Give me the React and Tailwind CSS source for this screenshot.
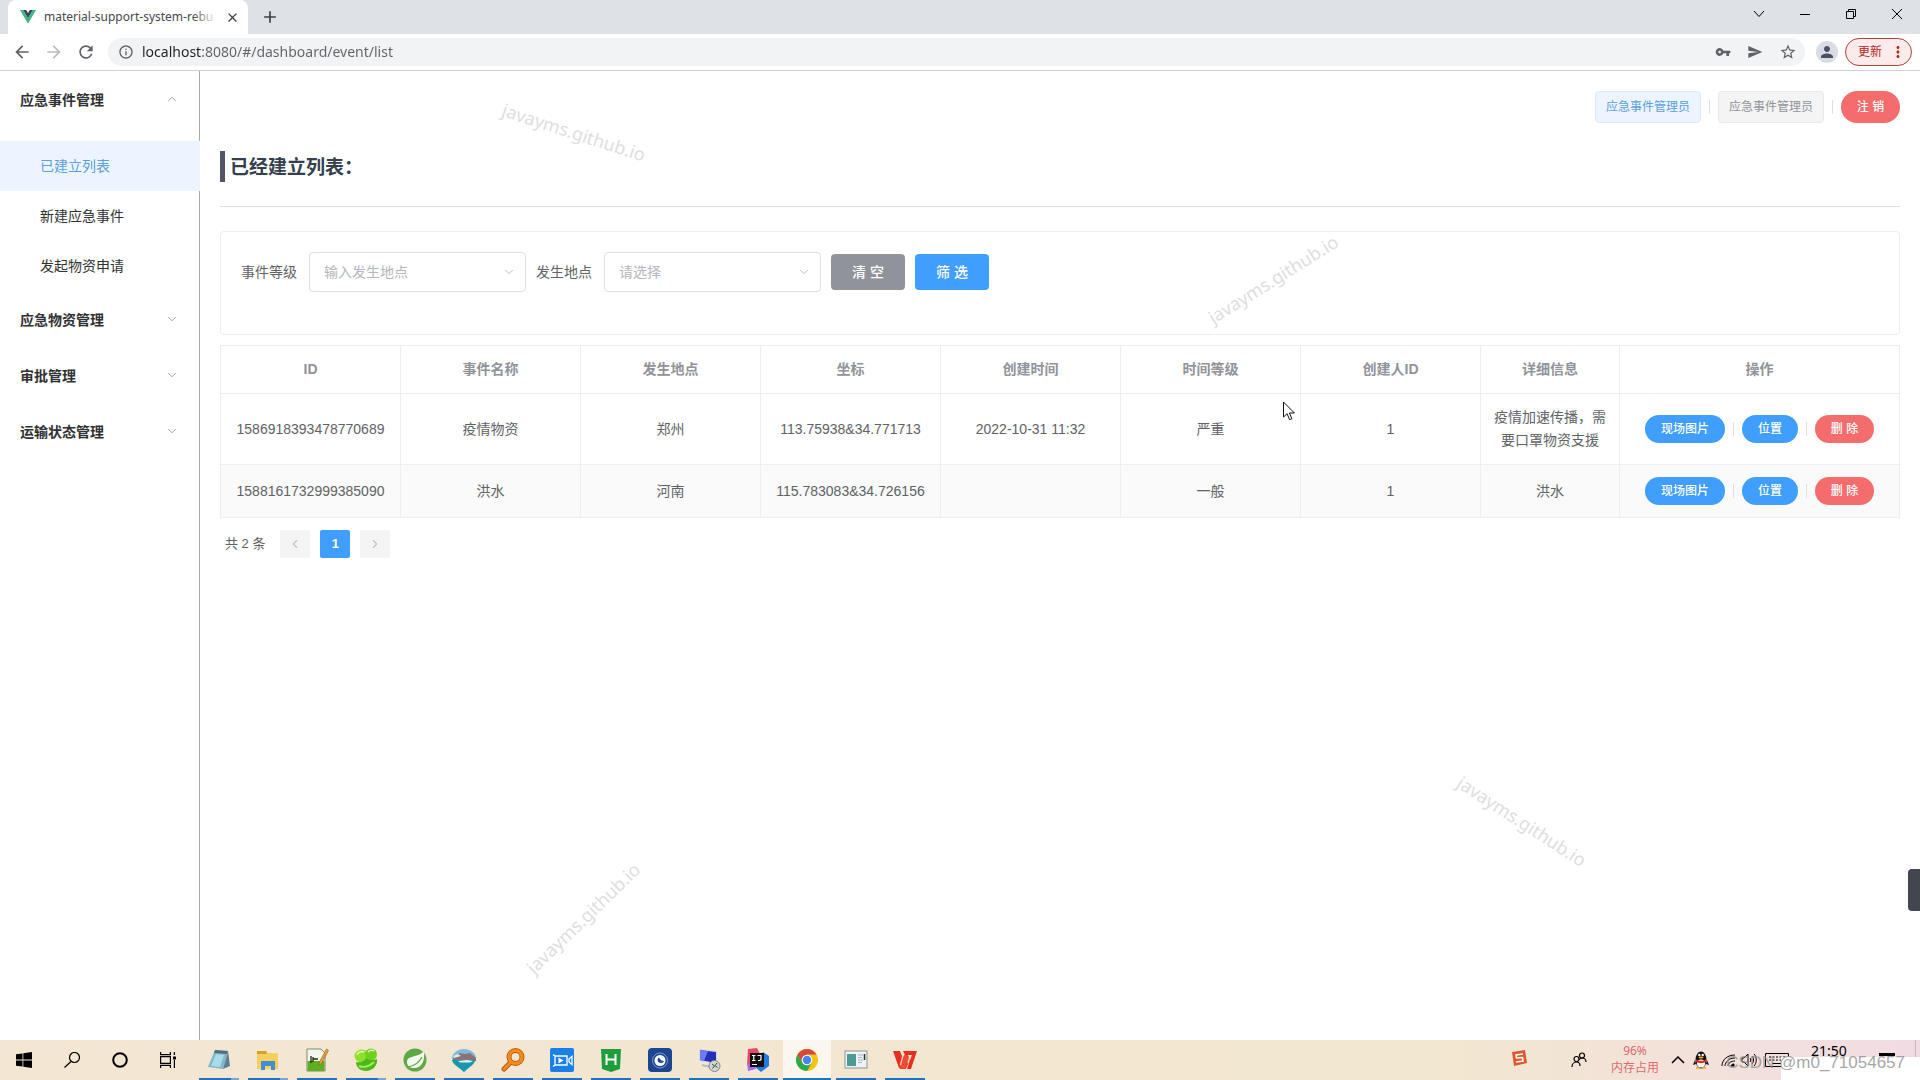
import {
    MdAdd,
    MdArrowBack,
    MdArrowForward,
    MdClose,
    MdInfoOutline,
    MdMoreVert,
    MdPerson,
    MdRefresh,
    MdSend,
    MdStarBorder,
    MdVpnKey,
} from 'react-icons/md';
import { ChevronDown, ChevronLeft, ChevronRight, ChevronUp } from 'lucide-react';

const EVENT_LINKS = [
    { label: '已建立列表', href: '#/dashboard/event/list', active: true },
    { label: '新建应急事件', href: '#/dashboard/event/create' },
    { label: '发起物资申请', href: '#/dashboard/event/apply' },
];

const CLOSED_GROUPS = ['应急物资管理', '审批管理', '运输状态管理'];

const COLUMNS = ['ID', '事件名称', '发生地点', '坐标', '创建时间', '时间等级', '创建人ID', '详细信息', '操作'];

const ROWS = [
    {
        id: '1586918393478770689',
        name: '疫情物资',
        place: '郑州',
        point: '113.75938&34.771713',
        created: '2022-10-31 11:32',
        level: '严重',
        creator: '1',
        detail: '疫情加速传播，需要口罩物资支援',
    },
    {
        id: '1588161732999385090',
        name: '洪水',
        place: '河南',
        point: '115.783083&34.726156',
        created: '',
        level: '一般',
        creator: '1',
        detail: '洪水',
    },
];

function VueLogo() {
    return (
        <svg viewBox="0 0 16 14" className="h-3.5 w-4 shrink-0" aria-hidden="true">
            <path d="M0 0h3.2L8 8.3 12.8 0H16L8 13.8z" fill="#41b883" />
            <path d="M3.2 0h3L8 3.1 9.8 0h3L8 8.3z" fill="#35495e" />
        </svg>
    );
}

function BrowserChrome() {
    return (
        <header className="font-['Noto_Sans','Noto_Sans_CJK_SC',sans-serif]">
            <div className="flex h-[34px] bg-[#dee1e6] pl-2">
                <div className="flex w-60 items-center rounded-t-lg bg-white pl-3 pr-2">
                    <VueLogo />
                    <span className="relative ml-2 flex-1 whitespace-nowrap text-xs text-[#45484c]">
                        material-support-system-rebu
                        <span className="absolute inset-y-0 right-0 w-6 bg-linear-to-r from-white/0 to-white" />
                    </span>
                    <button type="button" aria-label="Close tab" className="ml-2 text-[#3c4043]">
                        <MdClose size={15} />
                    </button>
                </div>
                <button type="button" aria-label="New tab" className="ml-3 text-[#3c4043]">
                    <MdAdd size={20} />
                </button>
                <div className="ml-auto flex h-7 text-black">
                    <button type="button" aria-label="Search tabs" className="flex w-[46px] items-center justify-center">
                        <svg viewBox="0 0 12 12" className="size-3" fill="none" stroke="currentColor">
                            <path d="M1 3l5 5.5L11 3" />
                        </svg>
                    </button>
                    <button type="button" aria-label="Minimize" className="flex w-[46px] items-center justify-center">
                        <svg viewBox="0 0 10 10" className="size-2.5" fill="none" stroke="currentColor">
                            <path d="M0 5.5h10" />
                        </svg>
                    </button>
                    <button type="button" aria-label="Restore" className="flex w-[46px] items-center justify-center">
                        <svg viewBox="0 0 10 10" className="size-2.5" fill="none" stroke="currentColor">
                            <path d="M.5 2.5h7v7h-7zM2.5 2.5v-2h7v7h-2" />
                        </svg>
                    </button>
                    <button type="button" aria-label="Close window" className="flex w-[46px] items-center justify-center">
                        <svg viewBox="0 0 10 10" className="size-2.5" fill="none" stroke="currentColor">
                            <path d="M0 0l10 10M10 0L0 10" />
                        </svg>
                    </button>
                </div>
            </div>
            <div className="flex h-[37px] items-center border-b border-[#d0d2d5] bg-white pl-3 pr-2 text-[#5f6368]">
                <button type="button" aria-label="Back">
                    <MdArrowBack size={20} />
                </button>
                <button type="button" aria-label="Forward" className="ml-3 text-[#babcbe]">
                    <MdArrowForward size={20} />
                </button>
                <button type="button" aria-label="Reload" className="ml-3">
                    <MdRefresh size={20} />
                </button>
                <div className="ml-3 flex h-7 flex-1 items-center rounded-full bg-[#f1f3f4] pl-2.5 pr-2">
                    <MdInfoOutline size={16} />
                    <input
                        aria-label="Address"
                        readOnly
                        value="localhost:8080/#/dashboard/event/list"
                        className="ml-2 flex-1 bg-linear-to-r from-[#202124] from-[60px] to-[#5f6368] to-[60px] bg-clip-text text-sm text-transparent outline-none"
                    />
                    <button type="button" aria-label="Passwords">
                        <MdVpnKey size={16} />
                    </button>
                    <button type="button" aria-label="Share" className="ml-4">
                        <MdSend size={16} />
                    </button>
                    <button type="button" aria-label="Bookmark" className="ml-4">
                        <MdStarBorder size={18} />
                    </button>
                </div>
                <button
                    type="button"
                    aria-label="Profile"
                    className="ml-[11px] flex size-[22px] items-center justify-center rounded-full bg-[#dadce3] text-[#4a5164]"
                >
                    <MdPerson size={18} />
                </button>
                <button
                    type="button"
                    className="ml-[7px] flex h-7 w-[67px] items-center justify-between rounded-full border border-[#b3403a] bg-[#fbeceb] pl-3 pr-1 text-xs text-[#b3261e]"
                >
                    更新
                    <MdMoreVert size={18} />
                </button>
            </div>
        </header>
    );
}

function Sidebar() {
    return (
        <nav className="w-[200px] shrink-0 border-r border-[#a9a9a9] text-sm text-[#303133]">
            <button type="button" className="flex h-14 w-full items-center justify-between px-5 font-bold">
                <span className="pt-0.5">应急事件管理</span>
                <ChevronUp size={14} strokeWidth={1.5} className="text-[#909399]" />
            </button>
            <ul className="pt-3.5">
                {EVENT_LINKS.map((item) => (
                    <li key={item.label}>
                        <a
                            href={item.href}
                            className={
                                item.active
                                    ? '-mr-px flex h-[50px] items-center bg-[#ecf5ff] pl-10 text-[#5a9fdc]'
                                    : 'flex h-[50px] items-center pl-10'
                            }
                        >
                            {item.label}
                        </a>
                    </li>
                ))}
            </ul>
            {CLOSED_GROUPS.map((label) => (
                <button key={label} type="button" className="flex h-14 w-full items-center justify-between px-5 font-bold">
                    <span className="pt-0.5">{label}</span>
                    <ChevronDown size={14} strokeWidth={1.5} className="text-[#909399]" />
                </button>
            ))}
        </nav>
    );
}

function Divider() {
    return <span className="mx-2 h-3.5 w-px bg-[#dcdfe6]" />;
}

function FilterSelect({ id, label, placeholder }) {
    return (
        <div className="flex items-center">
            <label htmlFor={id} className="pr-3 text-[#606266]">
                {label}
            </label>
            <div className="relative">
                <select
                    id={id}
                    className="h-10 w-[217px] appearance-none rounded border border-[#dcdfe6] bg-white px-3.5 text-sm text-[#b4b7bd]"
                >
                    <option>{placeholder}</option>
                </select>
                <ChevronDown size={14} strokeWidth={1.5} className="pointer-events-none absolute right-2.5 top-[13px] text-[#b4b7bd]" />
            </div>
        </div>
    );
}

function RowActions() {
    return (
        <div className="flex items-center justify-center text-xs text-white">
            <button type="button" className="h-7 w-20 rounded-full bg-[#409eff] font-medium">
                现场图片
            </button>
            <Divider />
            <button type="button" className="h-7 w-14 rounded-full bg-[#409eff] font-medium">
                位置
            </button>
            <Divider />
            <button type="button" className="h-7 w-[59px] rounded-full bg-[#f56c6c] font-medium">
                删 除
            </button>
        </div>
    );
}

function EventTable() {
    return (
        <table className="mt-2.5 w-full table-fixed border-collapse text-center leading-[23px] text-[#606266]">
            <colgroup>
                <col span={7} className="w-[180px]" />
                <col className="w-[139px]" />
                <col />
            </colgroup>
            <thead>
                <tr className="h-12 text-[#909399]">
                    {COLUMNS.map((name) => (
                        <th key={name} className="border border-[#ebeef5] font-bold">
                            {name}
                        </th>
                    ))}
                </tr>
            </thead>
            <tbody>
                {ROWS.map((row) => (
                    <tr key={row.id} className="even:bg-[#fafafa]">
                        {Object.entries(row).map(([key, value]) => (
                            <td key={key} className="border border-[#ebeef5] px-2.5 py-3">
                                {value}
                            </td>
                        ))}
                        <td className="border border-[#ebeef5] px-2.5 py-3">
                            <RowActions />
                        </td>
                    </tr>
                ))}
            </tbody>
        </table>
    );
}

function Pagination() {
    return (
        <div className="mt-3 flex items-center pl-[5px] text-[13px] text-[#606266]">
            <span className="mr-[15px]">共 2 条</span>
            <button type="button" aria-label="Previous" className="flex h-7 w-[30px] items-center justify-center rounded-xs bg-[#f4f4f5] text-[#c0c4cc]">
                <ChevronLeft size={14} />
            </button>
            <button type="button" className="mx-2.5 h-7 w-[30px] rounded-xs bg-[#409eff] font-bold text-white">
                1
            </button>
            <button type="button" aria-label="Next" className="flex h-7 w-[30px] items-center justify-center rounded-xs bg-[#f4f4f5] text-[#c0c4cc]">
                <ChevronRight size={14} />
            </button>
        </div>
    );
}

function EventList() {
    return (
        <main className="min-w-0 flex-1 px-5 text-sm">
            <div className="flex items-center justify-end pt-5 text-xs">
                <span className="rounded border border-[#d9ecff] bg-[#ecf5ff] px-2.5 leading-[30px] text-[#5a9fdc]">应急事件管理员</span>
                <Divider />
                <span className="rounded border border-[#e9e9eb] bg-[#f4f4f5] px-2.5 leading-[30px] text-[#909399]">应急事件管理员</span>
                <Divider />
                <button type="button" className="h-8 w-[59px] rounded-full bg-[#f56c6c] font-medium text-white">
                    注 销
                </button>
            </div>
            <h3 className="mt-7 border-l-[5px] border-[#505663] pl-[5px] pt-[3px] text-[19px] font-bold leading-7 text-[#34404e]">
                已经建立列表：
            </h3>
            <hr className="mt-6 border-[#dcdfe6]" />

            <form className="mt-6 flex h-[104px] items-start gap-2.5 rounded border border-[#ebeef5] px-5 pt-5">
                <FilterSelect id="level" label="事件等级" placeholder="输入发生地点" />
                <FilterSelect id="place" label="发生地点" placeholder="请选择" />
                <button type="reset" className="mt-0.5 h-9 w-[74px] rounded bg-[#909399] font-medium text-white">
                    清 空
                </button>
                <button type="button" className="mt-0.5 h-9 w-[74px] rounded bg-[#409eff] font-medium text-white">
                    筛 选
                </button>
            </form>

            <EventTable />
            <Pagination />
        </main>
    );
}

const APPS = [
    {
        name: 'Notepad',
        more: true,
        icon: (
            <>
                <path d="M8 2l13 1-5 18-15-2z" fill="#7fb9cc" />
                <path d="M8 2l13 1-1 3L7 5z" fill="#4f6f7c" />
                <path d="M9 6l8 1-4 12-9-1z" fill="#a9dbe8" />
                <path d="M21 3l2 15-7 3z" fill="#5e7f90" />
            </>
        ),
    },
    {
        name: 'Explorer',
        more: true,
        icon: (
            <>
                <path d="M1 3h9l2 2h10v16H1z" fill="#f7cf5c" />
                <path d="M1 3h9l1 3H1z" fill="#d9a026" />
                <path d="M5 22v-9h14v9h-4v-4H9v4z" fill="#3f8fd2" />
            </>
        ),
    },
    {
        name: 'Editor',
        icon: (
            <>
                <path d="M2 1h14l4 4v18H2z" fill="#f4f7ee" stroke="#7c8c70" />
                <path d="M2.500 13h17v10h-17z" fill="#5fae1e" />
                <path d="M6 8v7M8 9v5M8 11h5" stroke="#1d2b14" strokeWidth="1.300" />
                <path d="M21.500 1l2 1.500-7 13-2.500 1.500.3-3z" fill="#e2a13a" stroke="#8b5a1b" strokeWidth=".6" />
            </>
        ),
    },
    {
        name: 'Clover',
        more: true,
        icon: (
            <>
                <ellipse cx="7.500" cy="8" rx="7" ry="6.500" fill="#8fe02c" />
                <ellipse cx="17" cy="6.500" rx="6" ry="6" fill="#6fcf1c" />
                <path d="M2 14c5 1 9-1 10-4 2 2 7 3 11 1 1 7-5 12-11 12-6 0-10-4-10-9z" fill="#4db81a" />
                <path d="M3 7c1-3 4-4 7-3M14 4c2-2 4-2 6-1" stroke="#dcfab0" strokeWidth="1.500" fill="none" />
                <path d="M5 18c5 2 11 0 15-4" stroke="#a5ec5c" strokeWidth="2" fill="none" />
            </>
        ),
    },
    {
        name: 'Spring',
        icon: (
            <>
                <circle cx="12" cy="12" r="11.500" fill="#5fa944" />
                <path d="M21 3c1 10-2 17-10 17-4 0-7-2-7-6 0-7 11-4 17-11z" fill="#f4f8ee" />
                <path d="M5 19c6-1 11-4 14-10" stroke="#5fa944" strokeWidth="1.200" fill="none" />
            </>
        ),
    },
    {
        name: 'Navicat',
        icon: (
            <>
                <path d="M12 1c6 0 12 4 12 9 0 6-7 9-12 14C7 19 0 16 0 10c0-5 6-9 12-9z" fill="#7dbbdd" />
                <path d="M1 10l7-5 5 1 5-1 6 5v3H1z" fill="#8a7276" />
                <path d="M1 8l5-2 3 2-7 2z" fill="#dce9f2" />
                <path d="M0 12h23c-1 5-6 7-11 12C7 19 1 17 0 12z" fill="#1697ad" />
                <path d="M6 13l9-1 6 1-3 1.500H8z" fill="#dff3f5" />
            </>
        ),
    },
    {
        name: 'Everything',
        icon: (
            <>
                <path d="M10 14l-7 7" stroke="#b45a0b" strokeWidth="5" strokeLinecap="round" />
                <circle cx="14.500" cy="9" r="6.500" fill="none" stroke="#b45a0b" strokeWidth="5" />
                <path d="M10 14l-7 7" stroke="#f58a1f" strokeWidth="3" strokeLinecap="round" />
                <circle cx="14.500" cy="9" r="6.500" fill="none" stroke="#f58a1f" strokeWidth="3.200" />
            </>
        ),
    },
    {
        name: 'Recorder',
        icon: (
            <>
                <rect width="24" height="24" rx="2" fill="#1a7fe6" />
                <path d="M3 6.500l2 1.500h12v9H5l-2 1.500M5 8v9M19 11l3-2.500v8L19 14z" fill="none" stroke="#fff" strokeWidth="1.300" />
                <path d="M8.500 9.500l5 3-5 3z" fill="#fff" />
            </>
        ),
    },
    {
        name: 'HBuilder',
        icon: (
            <>
                <path d="M2 1h20l-1 20-9 3-9-3z" fill="#1f9d3a" />
                <path d="M7.500 6v11M16.500 6v11M7.500 11.500h9" stroke="#fff" strokeWidth="2" />
            </>
        ),
    },
    {
        name: 'Cloud',
        icon: (
            <>
                <rect width="24" height="24" rx="4" fill="#1e4590" />
                <circle cx="12" cy="12.500" r="7.500" fill="none" stroke="#8fabdc" strokeWidth=".8" />
                <circle cx="12" cy="12.500" r="5.500" fill="#fff" />
                <path d="M10.500 9.500c-2 2.500-.5 5.500 2.500 5.500 1.500 0 2.500-.8 3-2l-2.500-.5z" fill="#1e4590" />
            </>
        ),
    },
    {
        name: 'Remote',
        icon: (
            <>
                <path d="M2 1l18 2v13L2 13z" fill="#d4dbe6" />
                <path d="M3 2l16 2v11L3 12z" fill="#2530b8" />
                <path d="M3 2l8 1-4 10-4-1z" fill="#6f7cf0" />
                <path d="M5 16l9 2v2l-9-2z" fill="#b4bcc8" />
                <circle cx="17.500" cy="18" r="5.500" fill="#d3d6d2" stroke="#82867f" />
                <path d="M15 16l2.500 2-2 2.500M20 15l-2 2.500 2.500 2" stroke="#3c4a2d" fill="none" />
            </>
        ),
    },
    {
        name: 'IDEA',
        icon: (
            <>
                <path d="M2 1l9-1 3 6-5 12-8-1z" fill="#e64c68" />
                <path d="M1 15l7 2 2 4-8 2z" fill="#a06cf0" />
                <path d="M17 4l6 4v10l-8 6-6-5z" fill="#2377e0" />
                <rect x="4" y="5" width="14" height="14" fill="#101010" />
                <path d="M6 7.500h3.500M7.750 7.500v5M6 12.500h3.500M11.500 7.500h3.500v4l-1 1h-2M6 16.500h5" stroke="#fff" strokeWidth="1.200" fill="none" />
            </>
        ),
    },
    {
        name: 'Chrome',
        active: true,
        icon: (
            <>
                <circle cx="12" cy="12" r="11" fill="#fbc116" />
                <path d="M2.500 6.500A11 11 0 0 1 21.530 6.500H12L7.240 14.750z" fill="#d9463a" />
                <path d="M2.500 6.500A11 11 0 0 0 12 23L16.760 14.750 12 12 7.240 14.750z" fill="#2da94f" />
                <circle cx="12" cy="12" r="5.300" fill="#fff" />
                <circle cx="12" cy="12" r="4.200" fill="#4285f4" />
            </>
        ),
    },
    {
        name: 'Viewer',
        icon: (
            <>
                <rect x="1" y="3" width="22" height="17" fill="#eef2f4" stroke="#8b9497" />
                <rect x="3" y="6" width="9" height="12" fill="#4d9a93" />
                <path d="M14 7h5M14 9.500h4M14 12h5M14 14.500h4" stroke="#9fb3c4" />
                <path d="M20.500 6v6" stroke="#22303a" strokeWidth="1.500" />
            </>
        ),
    },
    {
        name: 'WPS',
        icon: (
            <>
                <path d="M0 3h7l3.500 9L8 20H6z" fill="#e5301f" />
                <path d="M6 20l5-13h4l2 5-4 9H7z" fill="#f04a35" />
                <path d="M10 3h14l-6 18h-4l3-9 2-5h-7z" fill="#e5301f" />
                <path d="M9.500 9l-2 8M16.500 10l-1.500 5" stroke="#ffd9cf" strokeWidth="1.200" fill="none" />
            </>
        ),
    },
];

function TaskbarApp({ app }) {
    return (
        <button
            type="button"
            aria-label={app.name}
            className={app.active ? 'flex w-12 flex-col items-center bg-[#fcf7ee]' : 'flex w-12 flex-col items-center'}
        >
            <svg viewBox="0 0 24 24" className="mt-2 size-6">
                {app.icon}
            </svg>
            <span className={app.active ? 'mt-auto flex h-0.5 w-12 bg-[#1f74bd]' : 'mt-auto flex h-0.5 w-10 bg-[#1f74bd]'}>
                {app.more ? <span className="ml-auto w-2 bg-[#7ba6cf]" /> : null}
            </span>
        </button>
    );
}

function SystemTray() {
    return (
        <div className="relative ml-auto flex items-center text-black">
            <svg viewBox="0 0 16 16" className="mb-1 size-4" aria-label="Input method">
                <path d="M1 2l13-2 2 13-13 3z" fill="#e2562c" />
                <path d="M12 4L5 5l.5 3 6-.5.5 3.500-7 1" stroke="#fff" strokeWidth="1.600" fill="none" />
            </svg>
            <svg viewBox="0 0 16 16" className="ml-11 size-4" fill="none" stroke="currentColor" strokeWidth="1.200" aria-label="People">
                <circle cx="5.500" cy="7" r="2.500" />
                <path d="M1 15c0-3 2-5 4.500-5S9 12 9 14" />
                <circle cx="11" cy="3.500" r="2.500" />
                <path d="M8 7.500c1-1 2-1.500 3-1.500 2 0 4 1.500 4 4" />
            </svg>
            <div className="mb-0.5 ml-6 text-center text-xs leading-[17px] text-[#e0696f]">
                <div>96%</div>
                <div>内存占用</div>
            </div>
            <svg viewBox="0 0 14 8" className="ml-3 h-2 w-3.5" fill="none" stroke="currentColor" strokeWidth="1.500">
                <path d="M1 7l6-6 6 6" />
            </svg>
            <svg viewBox="0 0 16 18" className="ml-2 h-[18px] w-4" aria-label="QQ">
                <ellipse cx="8" cy="9" rx="5.500" ry="8.500" fill="#111" />
                <path d="M2 9l-2 5 3-1zM14 9l2 5-3-1z" fill="#111" />
                <ellipse cx="8" cy="12.500" rx="4" ry="4" fill="#fff" />
                <path d="M3 8.500c3 1.800 7 1.800 10 0v2.500c-3 1.500-7 1.500-10 0z" fill="#e02a2a" />
                <circle cx="6.300" cy="4" r="1.200" fill="#fff" />
                <circle cx="9.700" cy="4" r="1.200" fill="#fff" />
                <ellipse cx="8" cy="6.500" rx="2.500" ry="1" fill="#f5a81c" />
                <path d="M3 17h4M9 17h4" stroke="#f5a81c" strokeWidth="1.500" />
            </svg>
            <svg viewBox="0 0 16 16" className="ml-3 size-4" fill="none" stroke="currentColor" aria-label="Network">
                <path d="M1 14C1 8 6 3 14 3M4 14c0-4 4-8 10-8M7 14c0-3 3-5 7-5" />
                <path d="M10 14c0-1 1-2 3-2v2z" fill="currentColor" />
            </svg>
            <svg viewBox="0 0 16 16" className="ml-1 size-4" fill="none" stroke="currentColor" aria-label="Volume">
                <path d="M1 6h2l4-4v12l-4-4H1zM9 6c1 1 1 3 0 4M11 4c2 2 2 6 0 8M13 2c3 3 3 9 0 12" />
            </svg>
            <svg viewBox="0 0 24 14" className="ml-2 h-3.5 w-6" fill="none" stroke="currentColor" aria-label="Keyboard">
                <path d="M.5.5h23v13H.5z" />
                <path d="M4 4h16M4 7h16" strokeDasharray="2 1.500" />
                <path d="M7 10.500h10" />
            </svg>
            <div className="h-full w-[131px]">
                <div className="mr-1 flex h-[17px] items-start border-r border-[#c9b9bb] pl-5 pt-0.5">
                    <time className="w-10 text-center text-sm leading-[18px]">21:50</time>
                    <span className="ml-[30px] mt-[11px] h-[3px] w-4 bg-black" />
                </div>
            </div>
            {/* stamp covering the corner of the bar */}
            <div className="absolute bottom-0 right-0 h-[23px] w-[139px] bg-white" />
            <span className="absolute bottom-[7px] right-[15px] whitespace-nowrap font-['Liberation_Sans',sans-serif] text-[17px] leading-5 text-[#8f8f8f]/80">
                CSDN @m0_71054657
            </span>
        </div>
    );
}

function Taskbar() {
    return (
        <footer className="flex h-10 bg-linear-to-r from-[#f3e6d3] via-[#f2e7cf] via-75% to-[#f2dce4] font-['Noto_Sans','Noto_Sans_CJK_SC',sans-serif]">
            <button type="button" aria-label="Start" className="flex w-12 items-center justify-center">
                <svg viewBox="0 0 16 16" className="size-4">
                    <path d="M0 2.300L6.500 1.400v6.200H0zM7.300 1.300L16 0v7.600H7.300zM0 8.400h6.500v6.200L0 13.700zM7.300 8.400H16V16l-8.700-1.300z" />
                </svg>
            </button>
            <button type="button" aria-label="Search" className="flex w-12 items-center justify-center">
                <svg viewBox="0 0 16 16" className="size-4" fill="none" stroke="#000" strokeWidth="1.200">
                    <circle cx="10.500" cy="5.500" r="5" />
                    <path d="M7 9.500L.5 15.500" />
                </svg>
            </button>
            <button type="button" aria-label="Cortana" className="flex w-12 items-center justify-center">
                <svg viewBox="0 0 16 16" className="size-4" fill="none" stroke="#000" strokeWidth="2">
                    <circle cx="8" cy="8" r="6.800" />
                </svg>
            </button>
            <button type="button" aria-label="Task view" className="mr-[3px] flex w-12 items-center justify-center">
                <svg viewBox="0 0 16 16" className="size-4" fill="none" stroke="#000" strokeWidth="1.200">
                    <path d="M.6 0v2.600h9.800V0M.6 16v-2.600h9.800V16M.6 4.600h9.800v6.800H.6zM14.400 0v3M14.400 8v8" />
                    <path d="M13 4.500h3v3h-3z" fill="#000" stroke="none" />
                </svg>
            </button>
            <div className="flex gap-px">
                {APPS.map((app) => (
                    <TaskbarApp key={app.name} app={app} />
                ))}
            </div>
            <SystemTray />
        </footer>
    );
}

// Free-floating marks laid over the whole screen
function Overlays() {
    const mark = "absolute w-40 text-center text-lg leading-6 text-[#dedede] font-['Noto_Sans',sans-serif]";
    return (
        <div className="pointer-events-none absolute inset-0 overflow-hidden">
            <span className={`${mark} left-[494px] top-[120px] rotate-[18deg]`}>javayms.github.io</span>
            <span className={`${mark} left-[1193px] top-[267px] rotate-[-32deg]`}>javayms.github.io</span>
            <span className={`${mark} left-[503px] top-[906px] rotate-[-44deg]`}>javayms.github.io</span>
            <span className={`${mark} left-[1442px] top-[809px] rotate-[33deg]`}>javayms.github.io</span>
            <svg viewBox="0 0 13 20" className="absolute left-[1283px] top-[401px] h-5 w-[13px]" aria-hidden="true">
                <path d="M.5 1v15l3.600-3.300 2.500 6 2.300-1-2.500-5.700h5z" fill="#fff" stroke="#111" />
            </svg>
            <div className="absolute right-0 top-[869px] h-[42px] w-3 rounded-l bg-[#42464e]" />
        </div>
    );
}

export default function App() {
    return (
        <div className="relative flex min-h-screen flex-col bg-white font-['Liberation_Sans','Noto_Sans_CJK_SC',sans-serif]">
            <BrowserChrome />
            <div className="flex flex-1">
                <Sidebar />
                <EventList />
            </div>
            <Taskbar />
            <Overlays />
        </div>
    );
}
